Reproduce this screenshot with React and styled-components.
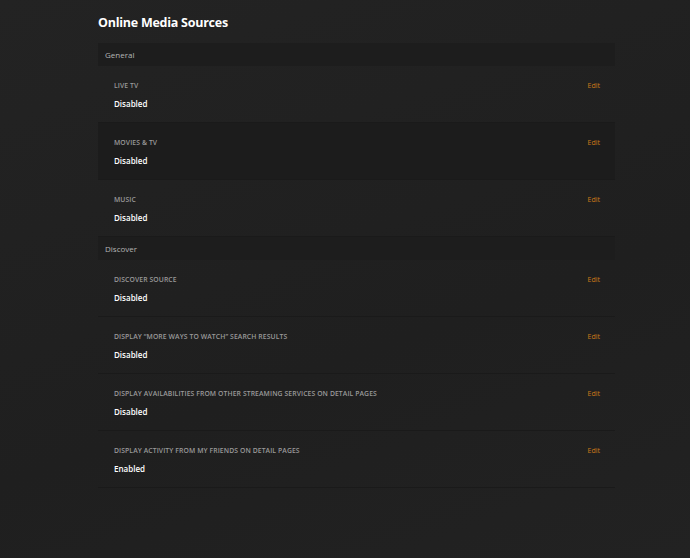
import React from "react";
import styled, { createGlobalStyle } from "styled-components";

const GlobalStyle = createGlobalStyle`
  html, body {
    margin: 0;
    padding: 0;
    background: #212121;
  }
  body {
    font-family: "Open Sans", "Liberation Sans", sans-serif;
    color: #fff;
  }
`;

const Page = styled.div`
  width: 690px;
  min-height: 558px;
  box-sizing: border-box;
  padding: 13px 75px 0 98px;
  background: linear-gradient(160deg, #232323 0%, #1f1f1f 60%, #222 100%);
`;

const Title = styled.h1`
  margin: 0 0 11px 0;
  font-size: 12.5px;
  line-height: 19px;
  font-weight: 700;
  letter-spacing: -0.25px;
`;

const SectionHeader = styled.div`
  height: 23px;
  display: flex;
  align-items: center;
  padding-left: 7px;
  background: #1d1d1d;
  font-size: 8px;
  color: #b5b5b5;
`;

const Row = styled.div`
  height: 57px;
  box-sizing: border-box;
  display: flex;
  justify-content: space-between;
  align-items: flex-start;
  padding: 15px 15px 0 16px;
  border-bottom: 1px solid #1a1a1a;
  background: ${(p) => (p.$active ? "#1c1c1c" : "transparent")};
`;

const Info = styled.div`
  display: flex;
  flex-direction: column;
  gap: 8px;
`;

const Label = styled.div`
  font-size: 6.8px;
  line-height: 9px;
  font-weight: 600;
  text-transform: uppercase;
  color: #9a9a9a;
  letter-spacing: 0.1px;
`;

const Value = styled.div`
  font-size: 8px;
  line-height: 11px;
  font-weight: 600;
  color: #fff;
`;

const Edit = styled.a`
  font-size: 7px;
  line-height: 9px;
  color: #cc7b19;
  cursor: pointer;
`;

const sections = [
  {
    name: "General",
    rows: [
      { label: "Live TV", value: "Disabled" },
      { label: "Movies & TV", value: "Disabled", active: true },
      { label: "Music", value: "Disabled" },
    ],
  },
  {
    name: "Discover",
    rows: [
      { label: "Discover Source", value: "Disabled" },
      { label: "Display “More Ways to Watch” search results", value: "Disabled" },
      { label: "Display availabilities from other streaming services on detail pages", value: "Disabled" },
      { label: "Display activity from my friends on detail pages", value: "Enabled" },
    ],
  },
];

export default function App() {
  return (
    <>
      <GlobalStyle />
      <Page>
        <Title>Online Media Sources</Title>
        {sections.map((s) => (
          <div key={s.name}>
            <SectionHeader>{s.name}</SectionHeader>
            {s.rows.map((r) => (
              <Row key={r.label} $active={r.active}>
                <Info>
                  <Label>{r.label}</Label>
                  <Value>{r.value}</Value>
                </Info>
                <Edit>Edit</Edit>
              </Row>
            ))}
          </div>
        ))}
      </Page>
    </>
  );
}
